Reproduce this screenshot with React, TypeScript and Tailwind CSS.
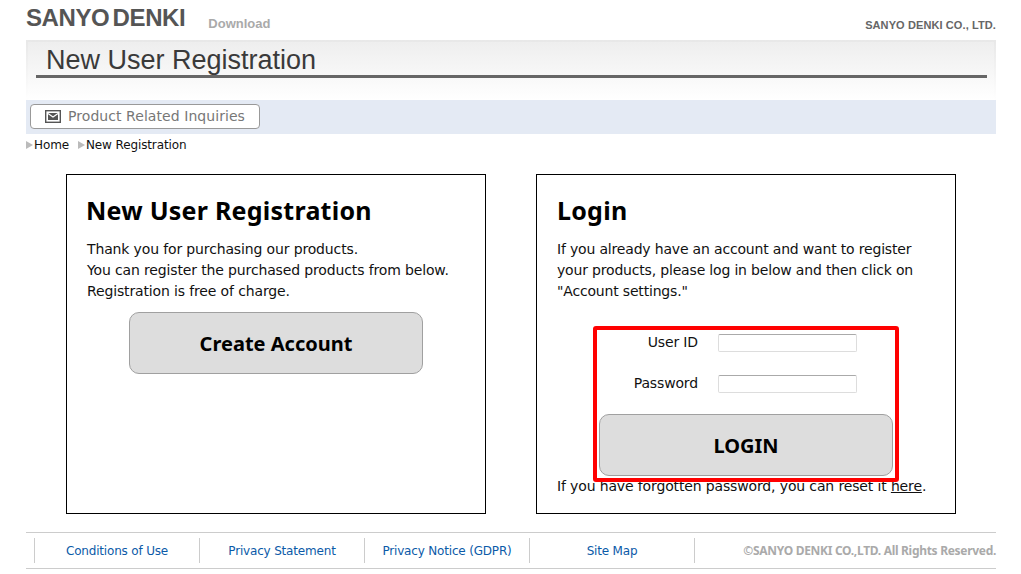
import React from 'react';

const bodyFont = "font-['DejaVu_Sans',sans-serif]";
const headFont = "font-['Noto_Sans',sans-serif]";

const footerLinks = ['Conditions of Use', 'Privacy Statement', 'Privacy Notice (GDPR)', 'Site Map'];

const Crumb: React.FC<{ label: string }> = ({ label }) => (
  <span className="flex items-center">
    <span className="mr-px h-0 w-0 border-y-[4px] border-l-[7px] border-y-transparent border-l-[#bbb]"></span>
    {label}
  </span>
);

const ActionButton: React.FC<{ label: string }> = ({ label }) => (
  <button className={`flex h-[62px] w-[294px] items-center justify-center rounded-[10px] border border-[#a0a0a0] bg-[#ddd] pt-[2px] text-xl font-bold text-black ${headFont}`}>
    {label}
  </button>
);

const Field: React.FC<{ label: string }> = ({ label }) => (
  <div className="flex h-[18px] items-center">
    <label className="mb-[2px] w-[105px] text-right text-sm tracking-[-0.14px] text-[#111]">{label}</label>
    <input className="ml-5 h-[18px] w-[139px] rounded-[2px] border border-[#ddd] border-t-[#aaa] bg-white" />
  </div>
);

export default function App() {
  return (
    <div className={`h-[574px] w-[1021px] overflow-hidden bg-white pr-[25px] pl-[26px] ${bodyFont}`}>
      <header className="flex h-10 items-start font-['Liberation_Sans',sans-serif]">
        <div className="mt-[5px] text-[24px] leading-[26px] font-bold tracking-[-0.4px] [word-spacing:-3px] text-[#555]">SANYO DENKI</div>
        <div className="mt-4 ml-[23px] text-[13px] leading-4 font-bold text-[#aaa]">Download</div>
        <div className="mt-[17px] ml-auto text-[11px] leading-4 font-bold tracking-[0.1px] text-[#666]">SANYO DENKI CO., LTD.</div>
      </header>

      <div className="h-[60px] border-x-2 border-t-2 border-[#e8e8e8] bg-gradient-to-b from-[#eee] to-white pt-[3px] pr-[7px] pl-2 [border-image:linear-gradient(#e8e8e8,#fff)_1]">
        <h1 className="border-b-[3px] border-[#666] pl-2.5 font-['Liberation_Sans',sans-serif] text-[27px] leading-[30px] text-[#3a3a3a]">
          New User Registration
        </h1>
      </div>

      <div className="flex h-[34px] items-start bg-[#e4eaf4] px-1 pt-1">
        <button className="flex h-[25px] w-[230px] items-center rounded border border-[#999] bg-white pl-[14px] text-sm tracking-[0.06px] text-[#777]">
          <svg width="16" height="13" viewBox="0 0 16 13" className="mr-[7px]">
            <rect x="0.7" y="0.7" width="14.6" height="11.6" fill="#fff" stroke="#555" strokeWidth="1.4" />
            <rect x="3" y="3" width="10" height="7" fill="#555" />
            <path d="M3 3.5 L8 7 L13 3.5" fill="none" stroke="#fff" strokeWidth="1.1" />
          </svg>
          <span className="mb-[2px]">Product Related Inquiries</span>
        </button>
      </div>

      <nav className="flex h-[21px] items-center gap-[9px] text-xs tracking-[-0.12px] text-[#111]">
        <Crumb label="Home" />
        <Crumb label="New Registration" />
      </nav>

      <main className="mt-[19px] flex justify-center gap-[50px]">
        <section className="h-[340px] w-[420px] border border-black px-5 pt-[18px]">
          <h2 className={`-ml-px text-[25px] leading-[34px] font-bold tracking-[0.25px] text-black ${headFont}`}>New User Registration</h2>
          <p className="mt-3 text-sm leading-[21px] tracking-[-0.14px] text-[#111]">
            Thank you for purchasing our products.
            <br />
            You can register the purchased products from below.
            <br />
            Registration is free of charge.
          </p>
          <div className="mt-[10px] flex justify-center">
            <ActionButton label="Create Account" />
          </div>
        </section>

        <section className="h-[340px] w-[420px] border border-black px-5 pt-[18px]">
          <h2 className={`text-[25px] leading-[34px] font-bold tracking-[0.25px] text-black ${headFont}`}>Login</h2>
          <p className="mt-3 text-sm leading-[21px] tracking-[-0.18px] text-[#111]">
            If you already have an account and want to register
            <br />
            your products, please log in below and then click on
            <br />
            "Account settings."
          </p>
          <div className="relative mt-6">
            <div className="flex flex-col gap-[23px] pt-[8px] pl-9">
              <Field label="User ID" />
              <Field label="Password" />
            </div>
            <div className="mt-[21px] ml-[42px]">
              <ActionButton label="LOGIN" />
            </div>
            <p className="text-sm leading-5 tracking-[-0.14px] text-[#111]">
              If you have forgotten password, you can reset it <a className="underline">here</a>.
            </p>
            <div className="absolute top-0 left-[36px] h-[156px] w-[306px] rounded-[3px] border-4 border-[#f00]"></div>
          </div>
        </section>
      </main>

      <footer className="mt-[18px] flex h-[37px] items-center border-y border-[#ccc] pl-2">
        {footerLinks.map((link) => (
          <a key={link} className="flex h-[25px] w-[165px] items-center justify-center border-l border-[#ccc] text-xs tracking-[-0.18px] text-[#0b5aa8]">
            {link}
          </a>
        ))}
        <div className={`flex h-[25px] flex-1 items-center justify-end border-l border-[#ccc] text-xs font-bold tracking-[-0.3px] text-[#aaa] ${headFont}`}>
          ©SANYO DENKI CO.,LTD. All Rights Reserved.
        </div>
      </footer>
    </div>
  );
}
